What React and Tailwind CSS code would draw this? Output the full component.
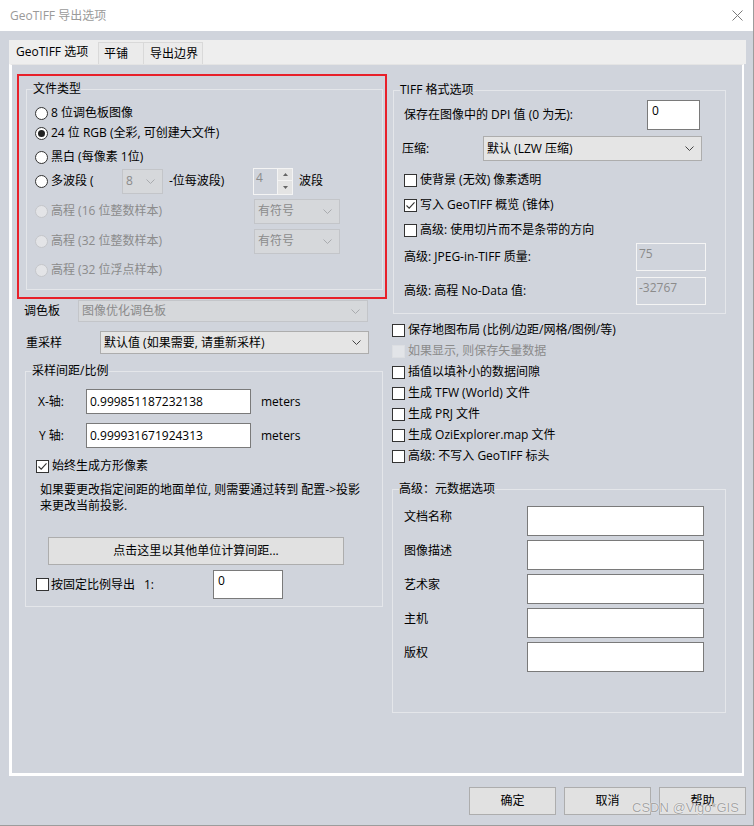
import React from "react";

const Chevron = ({ disabled }) => (
  <svg width="9" height="5" viewBox="0 0 9 5" className="shrink-0">
    <polyline points="0.5,0.5 4.5,4.5 8.5,0.5" fill="none" stroke={disabled ? "#a9abae" : "#444"} strokeWidth="1" />
  </svg>
);

const Radio = ({ checked, disabled }) => (
  <span
    className={`w-[13px] h-[13px] rounded-full border shrink-0 flex items-center justify-center ${
      disabled ? "border-[#c4c6ca] bg-[#e3e4e7]" : "border-[#333333] bg-white"
    }`}
  >
    {checked && <span className="w-[7px] h-[7px] rounded-full bg-[#222222]" />}
  </span>
);

const Check = ({ checked, disabled }) => (
  <span
    className={`w-[13px] h-[13px] border shrink-0 flex items-center justify-center ${
      disabled ? "border-[#dcdee2] bg-[#e2e4e8]" : "border-[#333333] bg-white"
    }`}
  >
    {checked && (
      <svg width="11" height="11" viewBox="0 0 11 11">
        <path d="M1.5 5.5 L4.2 8.2 L9.5 2.3" fill="none" stroke="#333" strokeWidth="1.1" />
      </svg>
    )}
  </span>
);

const Select = ({ text, disabled, className }) => (
  <div
    className={`flex items-center justify-between border pr-[7px] shrink-0 ${
      disabled ? "border-[#c3c5c9] bg-[#d6d8db] text-[#8b8b8b]" : "border-[#adadad] bg-[#e5e5e5] text-black"
    } ${className}`}
  >
    <span className="pl-[3px] whitespace-nowrap">{text}</span>
    <Chevron disabled={disabled} />
  </div>
);

const Group = ({ label, className, children }) => (
  <div className={`relative border border-[#e4e6ea] flex flex-col shrink-0 ${className}`}>
    <span className="absolute -top-[9px] left-[6px] bg-[#d0d4dc] leading-[16px] whitespace-nowrap">{label}</span>
    {children}
  </div>
);

const CbRow = ({ checked, disabled, children, className }) => (
  <div className={`h-[16px] flex items-center gap-[3px] ${className}`}>
    <Check checked={checked} disabled={disabled} />
    <span className={`whitespace-nowrap ${disabled ? "text-[#8b8b8b]" : ""}`}>{children}</span>
  </div>
);

const RadioRow = ({ checked, disabled, children, className }) => (
  <div className={`h-[20px] flex items-center ml-[8px] ${className}`}>
    <Radio checked={checked} disabled={disabled} />
    <span className={`ml-[3px] whitespace-nowrap ${disabled ? "text-[#8b8b8b]" : ""}`}>{children}</span>
  </div>
);

const Btn = ({ children, className }) => (
  <div className={`flex items-center justify-center border border-[#adadad] bg-[#e1e1e1] shrink-0 ${className}`}>
    {children}
  </div>
);

export default function App() {
  return (
    <div className="w-[754px] h-[826px] bg-[#d0d4dc] relative overflow-hidden flex flex-col border-r border-b border-[#9c9c9c] font-['Open_Sans','Noto_Sans_CJK_SC',sans-serif] text-[12px] leading-[16px] text-black">
      {/* title bar */}
      <div className="h-[31px] bg-white flex items-center justify-between pl-[10px] pr-[10px] shrink-0">
        <span className="text-[#9a9a9a] text-[12px]">GeoTIFF 导出选项</span>
        <svg width="11" height="11" viewBox="0 0 11 11">
          <path d="M0.5 0.5 L10.5 10.5 M10.5 0.5 L0.5 10.5" stroke="#7a7a7a" strokeWidth="1" />
        </svg>
      </div>
      <div className="h-[9px] shrink-0" />

      {/* tabs */}
      <div className="h-[24px] ml-[9px] w-[737px] bg-[#eeeeee] flex items-end shrink-0">
        <div className="w-[89px] h-[24px] flex items-center pl-[7px] whitespace-nowrap">GeoTIFF 选项</div>
        <div className="w-[46px] h-[22px] flex items-center pl-[5px] border border-b-0 border-[#d9d9d9] bg-[#ebebeb]">平铺</div>
        <div className="w-[59px] h-[22px] flex items-center pl-[6px] border border-b-0 border-l-0 border-[#d9d9d9] bg-[#ebebeb]">
          导出边界
        </div>
      </div>

      {/* panel */}
      <div className="ml-[9px] w-[735px] h-[712px] border-l-[3px] border-r-2 border-b-[3px] border-t border-l-white border-r-white border-b-white border-t-[#e4e4e4] flex items-start shrink-0">
        {/* left column */}
        <div className="ml-[5px] w-[370px] flex flex-col shrink-0">
          <div className="mt-[9px] h-[225px] border-2 border-[#e8202a] flex flex-col">
            <Group label="文件类型" className="ml-[7px] mt-[13px] w-[357px] h-[201px]">
              <RadioRow className="mt-[13px]">8 位调色板图像</RadioRow>
              <RadioRow checked>24 位 RGB (全彩, 可创建大文件)</RadioRow>
              <RadioRow className="mt-[4px]">黑白 (每像素 1位)</RadioRow>
              <div className="h-[20px] flex items-center ml-[8px] mt-[4px]">
                <Radio />
                <span className="ml-[3px] w-[71px] whitespace-nowrap">多波段 (</span>
                <Select disabled text="8" className="w-[41px] h-[25px]" />
                <span className="ml-[6px] w-[84px] whitespace-nowrap">-位每波段)</span>
                <div className="w-[40px] h-[27px] flex shrink-0">
                  <div className="w-[25px] h-[27px] border border-[#f4f4f4] text-[#8b8b8b] pl-[2px] pt-[1px]">4</div>
                  <div className="w-[15px] h-[27px] flex flex-col border border-l-0 border-[#f4f4f4]">
                    <div className="h-[12px] bg-[#e4e4e4] border-b border-[#f4f4f4] flex items-center justify-center">
                      <svg width="5" height="3" viewBox="0 0 5 3"><polygon points="2.5,0 5,3 0,3" fill="#666" /></svg>
                    </div>
                    <div className="flex-1 bg-[#e4e4e4] flex items-center justify-center">
                      <svg width="5" height="3" viewBox="0 0 5 3"><polygon points="0,0 5,0 2.5,3" fill="#666" /></svg>
                    </div>
                  </div>
                </div>
                <span className="ml-[6px] whitespace-nowrap">波段</span>
              </div>
              <div className="h-[20px] flex items-center ml-[8px] mt-[10px]">
                <Radio disabled />
                <span className="ml-[3px] w-[203px] whitespace-nowrap text-[#8b8b8b]">高程 (16 位整数样本)</span>
                <Select disabled text="有符号" className="w-[86px] h-[25px]" />
              </div>
              <div className="h-[20px] flex items-center ml-[8px] mt-[10px]">
                <Radio disabled />
                <span className="ml-[3px] w-[203px] whitespace-nowrap text-[#8b8b8b]">高程 (32 位整数样本)</span>
                <Select disabled text="有符号" className="w-[86px] h-[25px]" />
              </div>
              <RadioRow disabled className="mt-[9px]">高程 (32 位浮点样本)</RadioRow>
            </Group>
          </div>

          <div className="mt-[1px] h-[22px] flex items-center">
            <span className="ml-[7px] w-[54px]">调色板</span>
            <Select disabled text="图像优化调色板" className="w-[290px] h-[22px]" />
          </div>
          <div className="mt-[9px] h-[23px] flex items-center">
            <span className="ml-[9px] w-[74px]">重采样</span>
            <Select text="默认值 (如果需要, 请重新采样)" className="w-[269px] h-[23px]" />
          </div>

          <Group label="采样间距/比例" className="mt-[17px] ml-[8px] w-[358px] h-[236px]">
            <div className="mt-[17px] h-[25px] flex items-center">
              <span className="ml-[12px] w-[48px]">X-轴:</span>
              <div className="w-[165px] h-[25px] border border-[#7a7a7a] bg-white pl-[3px] flex items-center">0.999851187232138</div>
              <span className="ml-[10px]">meters</span>
            </div>
            <div className="mt-[9px] h-[25px] flex items-center">
              <span className="ml-[13px] w-[47px]">Y 轴:</span>
              <div className="w-[165px] h-[25px] border border-[#7a7a7a] bg-white pl-[3px] flex items-center">0.999931671924313</div>
              <span className="ml-[10px]">meters</span>
            </div>
            <CbRow checked className="mt-[10px] ml-[10px]">始终生成方形像素</CbRow>
            <div className="mt-[8px] ml-[14px] leading-[16px]">
              <div>如果要更改指定间距的地面单位, 则需要通过转到 配置-&gt;投影</div>
              <div>来更改当前投影.</div>
            </div>
            <Btn className="mt-[23px] ml-[22px] w-[296px] h-[28px]">点击这里以其他单位计算间距...</Btn>
            <div className="mt-[5px] h-[29px] flex items-center ml-[10px]">
              <Check />
              <span className="ml-[2px] w-[93px] whitespace-nowrap">按固定比例导出</span>
              <span className="w-[69px]">1:</span>
              <div className="w-[70px] h-[29px] border border-[#7a7a7a] bg-white pl-[4px] pt-[2px]">0</div>
            </div>
          </Group>
        </div>

        {/* right column */}
        <div className="ml-[5px] w-[334px] flex flex-col shrink-0">
          <Group label="TIFF 格式选项" className="mt-[25px] ml-[1px] w-[333px] h-[224px]">
            <div className="mt-[9px] h-[30px] flex items-center">
              <span className="ml-[10px] w-[243px] whitespace-nowrap">保存在图像中的 DPI 值 (0 为无):</span>
              <div className="w-[53px] h-[30px] border border-[#7a7a7a] bg-white pl-[4px] pt-[2px]">0</div>
            </div>
            <div className="mt-[6px] h-[25px] flex items-center">
              <span className="ml-[8px] w-[81px]">压缩:</span>
              <Select text="默认 (LZW 压缩)" className="w-[219px] h-[25px]" />
            </div>
            <CbRow className="mt-[11px] ml-[10px]">使背景 (无效) 像素透明</CbRow>
            <CbRow checked className="mt-[9px] ml-[10px]">写入 GeoTIFF 概览 (锥体)</CbRow>
            <CbRow className="mt-[9px] ml-[10px]">高级: 使用切片而不是条带的方向</CbRow>
            <div className="mt-[5px] h-[28px] flex items-center">
              <span className="ml-[10px] w-[232px] whitespace-nowrap">高级: JPEG-in-TIFF 质量:</span>
              <div className="w-[70px] h-[28px] border border-[#f4f4f4] pl-[2px] pt-[2px] text-[#8b8b8b]">75</div>
            </div>
            <div className="mt-[6px] h-[28px] flex items-center">
              <span className="ml-[10px] w-[232px] whitespace-nowrap">高级: 高程 No-Data 值:</span>
              <div className="w-[70px] h-[28px] border border-[#f4f4f4] pl-[2px] pt-[2px] text-[#8b8b8b]">-32767</div>
            </div>
          </Group>

          <CbRow className="mt-[8px]">保存地图布局 (比例/边距/网格/图例/等)</CbRow>
          <CbRow disabled className="mt-[5px]">如果显示, 则保存矢量数据</CbRow>
          <CbRow className="mt-[5px]">插值以填补小的数据间隙</CbRow>
          <CbRow className="mt-[5px]">生成 TFW (World) 文件</CbRow>
          <CbRow className="mt-[5px]">生成 PRJ 文件</CbRow>
          <CbRow className="mt-[5px]">生成 OziExplorer.map 文件</CbRow>
          <CbRow className="mt-[5px]">高级: 不写入 GeoTIFF 标头</CbRow>

          <Group label="高级：元数据选项" className="mt-[25px] w-[334px] h-[224px]">
            {["文档名称", "图像描述", "艺术家", "主机", "版权"].map((l, i) => (
              <div key={l} className={`h-[30px] flex items-start ${i === 0 ? "mt-[16px]" : "mt-[4px]"}`}>
                <span className="ml-[11px] w-[123px] pt-[3px]">{l}</span>
                <div className="w-[177px] h-[30px] border border-[#7a7a7a] bg-white" />
              </div>
            ))}
          </Group>
        </div>
      </div>

      {/* bottom buttons */}
      <div className="mt-[11px] flex justify-end gap-[8px] mr-[7px] shrink-0">
        <Btn className="w-[87px] h-[28px]">确定</Btn>
        <Btn className="w-[87px] h-[28px]">取消</Btn>
        <Btn className="w-[87px] h-[28px]">帮助</Btn>
      </div>

      <span className="absolute left-[632px] top-[800px] text-[13px] leading-[16px] font-['Liberation_Sans',sans-serif] text-[#a6a6a6] [text-shadow:0_0_1px_#ffffff,0_0_1px_#ffffff]">
        CSDN @Vigo*GIS
      </span>
    </div>
  );
}
